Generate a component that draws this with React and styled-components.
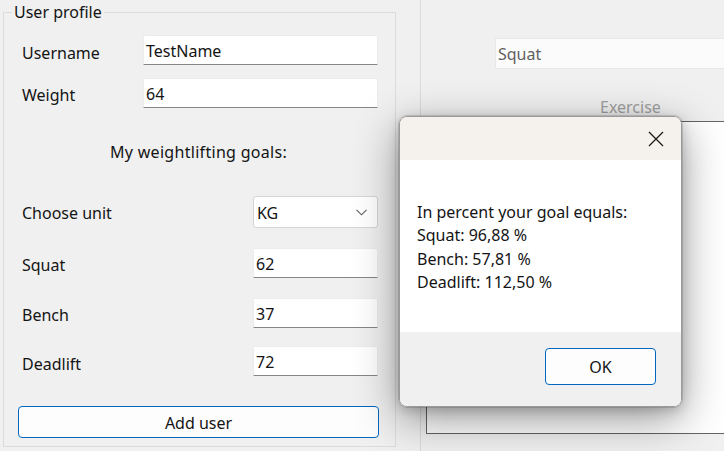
import React from 'react'
import styled, { createGlobalStyle } from 'styled-components'

const Global = createGlobalStyle`
    html, body {
        margin: 0;
        padding: 0;
        background: #f0f0f0;
    }
    body {
        font-family: "Noto Sans", "Open Sans", sans-serif;
        font-size: 16px;
        color: #141414;
    }
`

const Window = styled.div`
    position: relative;
    display: flex;
    width: 724px;
    height: 451px;
    overflow: hidden;
    background: #f0f0f0;
`

const GroupBox = styled.fieldset`
    box-sizing: border-box;
    flex: 0 0 393px;
    height: 445px;
    margin: 2px 0 0 3px;
    padding: 0 16px 0 14px;
    border: 1px solid #dcdcdc;
    display: flex;
    flex-direction: column;
    min-width: 0;
`

const Legend = styled.legend`
    margin-left: -6px;
    padding: 0 2px;
    line-height: 20px;
    font-size: 16px;
`

const Row = styled.div`
    display: grid;
    grid-template-columns: ${p => p.$labelWidth}px 1fr;
    align-items: center;
    margin-top: ${p => p.$top}px;
`

const Label = styled.span`
    padding: ${p => p.$shift || 0}px 0 0 4px;
    line-height: 20px;
`

const TextBox = styled.div`
    box-sizing: border-box;
    height: 30px;
    margin-right: 1px;
    padding: 2px 0 0 2px;
    background: #ffffff;
    border: 1px solid #ececec;
    border-bottom: 1px solid #868686;
    border-radius: 2px 2px 0 0;
    display: flex;
    align-items: center;
`

const Combo = styled.div`
    box-sizing: border-box;
    height: 32px;
    margin-right: 1px;
    padding: 1px 10px 0 3px;
    background: #ffffff;
    border: 1px solid #d4d4d4;
    border-radius: 3px;
    display: flex;
    align-items: center;
    justify-content: space-between;
`

const Heading = styled.div`
    margin-top: 34px;
    line-height: 20px;
    text-align: center;
    letter-spacing: 0.3px;
`

const Button = styled.div`
    box-sizing: border-box;
    height: ${p => p.$height}px;
    width: ${p => (p.$width ? p.$width + 'px' : 'auto')};
    padding-top: 1px;
    background: #fdfdfd;
    border: 1px solid #0067c0;
    border-radius: 4px;
    display: flex;
    align-items: center;
    justify-content: center;
    margin-top: ${p => p.$top || 0}px;
`

const Separator = styled.div`
    flex: 0 0 1px;
    margin-left: 24px;
    background: #dadada;
`

const RightPane = styled.div`
    flex: 1;
    display: flex;
    flex-direction: column;
    min-width: 0;
`

const ReadOnlyBox = styled.div`
    box-sizing: border-box;
    height: 31px;
    margin: 38px -40px 0 74px;
    padding: 1px 0 0 2px;
    background: #fbfbfb;
    border: 1px solid #e8e8e8;
    color: #5f5f5f;
    display: flex;
    align-items: center;
`

const Caption = styled.div`
    margin: 28px 0 0 179px;
    line-height: 20px;
    color: #a0a0a0;
`

const ListBox = styled.div`
    height: 311px;
    margin: 4px -40px 0 5px;
    background: #ffffff;
    border: 1px solid #646464;
`

const Dialog = styled.div`
    position: absolute;
    left: 399px;
    top: 116px;
    width: 283px;
    height: 291px;
    box-sizing: border-box;
    border: 1px solid #9a9a9a;
    border-radius: 8px;
    overflow: hidden;
    display: flex;
    flex-direction: column;
    box-shadow: 0 0 0 1px rgba(0, 0, 0, 0.12), 0 12px 44px rgba(0, 0, 0, 0.42), 0 3px 12px rgba(0, 0, 0, 0.18);
`

const TitleBar = styled.div`
    flex: 0 0 43px;
    background: #f5f1ec;
    display: flex;
    justify-content: flex-end;
    align-items: center;
    padding-right: 17px;
`

const Body = styled.div`
    flex: 0 0 172px;
    box-sizing: border-box;
    background: #ffffff;
    padding: 41px 0 0 17px;
    line-height: 23.4px;
`

const Footer = styled.div`
    flex: 1;
    background: #f0f0f0;
    display: flex;
    justify-content: flex-end;
    align-items: flex-start;
    padding: 16px 25px 0 0;
`

function Chevron() {
    return (
        <svg width="11" height="7" viewBox="0 0 11 7">
            <path d="M0.5 0.8 L5.5 5.8 L10.5 0.8" fill="none" stroke="#5c5c5c" strokeWidth="1.1" />
        </svg>
    )
}

function CloseIcon() {
    return (
        <svg width="16" height="16" viewBox="0 0 16 16">
            <path d="M1 1 L15 15 M15 1 L1 15" stroke="#1b1b1b" strokeWidth="1.3" />
        </svg>
    )
}

export default function App() {
    const goals = [
        { label: 'Squat', value: '62', top: 20, shift: 3 },
        { label: 'Bench', value: '37', top: 20, shift: 3 },
        { label: 'Deadlift', value: '72', top: 18, shift: 5 }
    ]

    return (
        <>
            <Global />
            <Window>
                <GroupBox>
                    <Legend>User profile</Legend>
                    <Row $labelWidth={125} $top={13}>
                        <Label $shift={6}>Username</Label>
                        <TextBox>TestName</TextBox>
                    </Row>
                    <Row $labelWidth={125} $top={13}>
                        <Label $shift={4}>Weight</Label>
                        <TextBox>64</TextBox>
                    </Row>
                    <Heading>My weightlifting goals:</Heading>
                    <Row $labelWidth={235} $top={34}>
                        <Label $shift={1}>Choose unit</Label>
                        <Combo>
                            KG
                            <Chevron />
                        </Combo>
                    </Row>
                    {goals.map(g => (
                        <Row key={g.label} $labelWidth={235} $top={g.top}>
                            <Label $shift={g.shift}>{g.label}</Label>
                            <TextBox>{g.value}</TextBox>
                        </Row>
                    ))}
                    <Button $height={32} $top={30}>Add user</Button>
                </GroupBox>
                <Separator />
                <RightPane>
                    <ReadOnlyBox>Squat</ReadOnlyBox>
                    <Caption>Exercise</Caption>
                    <ListBox />
                </RightPane>

                <Dialog>
                    <TitleBar>
                        <CloseIcon />
                    </TitleBar>
                    <Body>
                        In percent your goal equals:<br />
                        Squat: 96,88 %<br />
                        Bench: 57,81 %<br />
                        Deadlift: 112,50 %
                    </Body>
                    <Footer>
                        <Button $height={37} $width={111}>OK</Button>
                    </Footer>
                </Dialog>
            </Window>
        </>
    )
}
